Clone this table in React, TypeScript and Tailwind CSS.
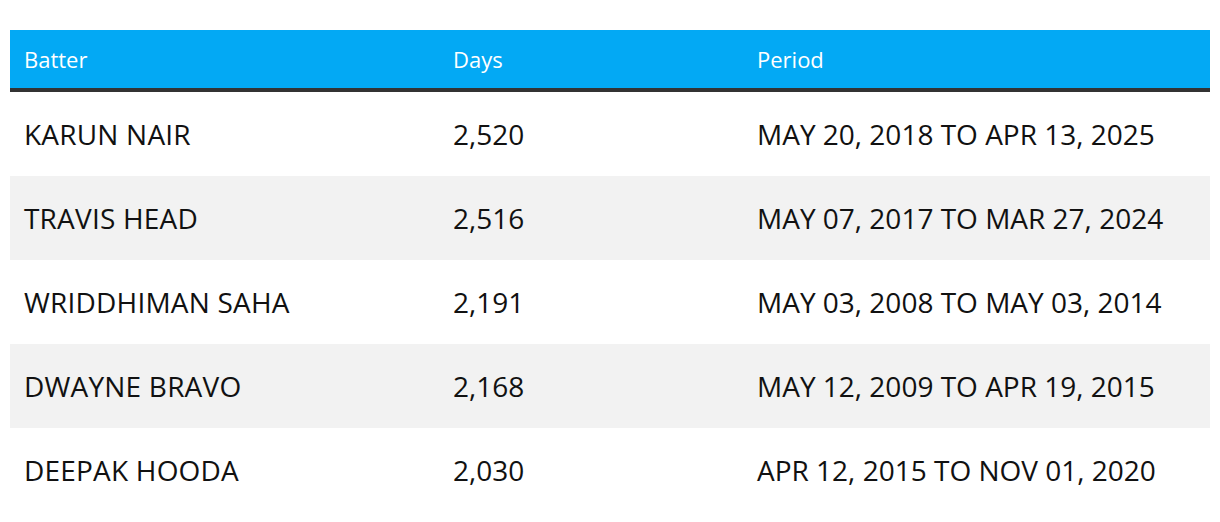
import React from "react";

const rows = [
  ["KARUN NAIR", "2,520", "MAY 20, 2018 TO APR 13, 2025"],
  ["TRAVIS HEAD", "2,516", "MAY 07, 2017 TO MAR 27, 2024"],
  ["WRIDDHIMAN SAHA", "2,191", "MAY 03, 2008 TO MAY 03, 2014"],
  ["DWAYNE BRAVO", "2,168", "MAY 12, 2009 TO APR 19, 2015"],
  ["DEEPAK HOODA", "2,030", "APR 12, 2015 TO NOV 01, 2020"],
];

export default function App() {
  return (
    <div className="w-[1220px] h-[522px] bg-white px-[10px] pt-[30px]" style={{ fontFamily: "'Open Sans', Roboto, sans-serif" }}>
      <div className="grid grid-cols-[429px_304px_467px] h-[62px] bg-[#03a9f4] border-b-4 border-[#333333] items-center text-white text-[22px]">
        <div className="pl-[14px]">Batter</div>
        <div className="pl-[14px]">Days</div>
        <div className="pl-[14px]">Period</div>
      </div>
      {rows.map((r, i) => (
        <div
          key={i}
          className={`grid grid-cols-[429px_304px_467px] h-[84px] items-center text-[28px] text-[#111111] ${i % 2 === 1 ? "bg-[#f2f2f2]" : "bg-white"}`}
        >
          <div className="pl-[14px] tracking-[0.2px]">{r[0]}</div>
          <div className="pl-[14px]">{r[1]}</div>
          <div className="pl-[14px]">{r[2]}</div>
        </div>
      ))}
    </div>
  );
}
